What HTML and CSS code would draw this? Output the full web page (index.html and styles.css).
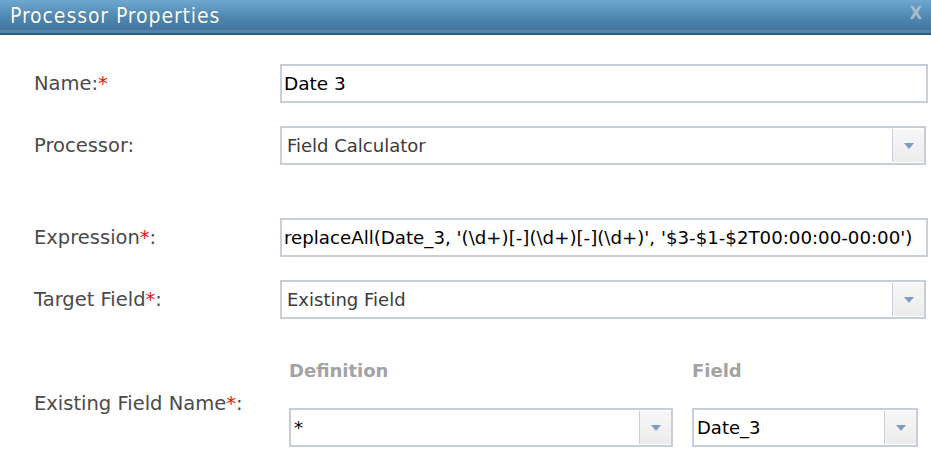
FILE: index.html
```html
<!DOCTYPE html>
<html lang="en">
<head>
  <meta charset="UTF-8">
  <title>Processor Properties</title>
  <link rel="stylesheet" href="styles.css">
</head>
<body>
  <div class="dialog">
    <div class="titlebar">
      <span class="title">Processor Properties</span>
      <span class="close">X</span>
    </div>

    <div class="form">
      <div class="row">
        <label class="label">Name:<span class="req">*</span></label>
        <div class="textbox dark">Date 3</div>
      </div>

      <div class="row">
        <label class="label">Processor:</label>
        <div class="select">
          <span class="select-value">Field Calculator</span>
          <span class="select-btn"><span class="arrow"></span></span>
        </div>
      </div>

      <div class="row spaced">
        <label class="label">Expression<span class="req">*</span>:</label>
        <div class="textbox dark expr">replaceAll(Date_3, '(\d+)[-](\d+)[-](\d+)', '$3-$1-$2T00:00:00-00:00')</div>
      </div>

      <div class="row">
        <label class="label">Target Field<span class="req">*</span>:</label>
        <div class="select">
          <span class="select-value">Existing Field</span>
          <span class="select-btn"><span class="arrow"></span></span>
        </div>
      </div>

      <div class="row field-row">
        <label class="label">Existing Field Name<span class="req">*</span>:</label>
        <div class="pair">
          <div class="col-head">Definition</div>
          <div class="col-head">Field</div>
          <div class="select">
            <span class="select-value dark">*</span>
            <span class="select-btn"><span class="arrow"></span></span>
          </div>
          <div class="select">
            <span class="select-value dark">Date_3</span>
            <span class="select-btn"><span class="arrow"></span></span>
          </div>
        </div>
      </div>
    </div>
  </div>
</body>
</html>
```

FILE: styles.css
```css
* {
  margin: 0;
  padding: 0;
  box-sizing: border-box;
}

body {
  width: 931px;
  height: 455px;
  background: #ffffff;
  font-family: 'DejaVu Sans', Verdana, sans-serif;
  overflow: hidden;
}

.titlebar {
  height: 35px;
  display: flex;
  align-items: center;
  justify-content: space-between;
  padding: 0 9px 2px 10px;
  background: linear-gradient(to bottom, #6ea7cf 0%, #5089b3 50%, #3f7099 100%);
  border-bottom: 2px solid #2f5c80;
  box-shadow: inset 0 -3px 0 rgba(255, 255, 255, 0.12);
}

.title {
  font-family: 'DejaVu Sans Condensed', 'DejaVu Sans', sans-serif;
  font-size: 21px;
  letter-spacing: 0.9px;
  color: #ffffff;
  text-shadow: 0 0 1px rgba(0, 0, 0, 0.3);
}

.close {
  font-family: 'DejaVu Sans Condensed', sans-serif;
  font-size: 18px;
  font-weight: bold;
  color: #a9bccc;
  margin-top: -6px;
}

.form {
  padding: 29px 3px 0 34px;
}

.row {
  display: grid;
  grid-template-columns: 246px 1fr;
  align-items: center;
  margin-bottom: 23px;
}

.row.spaced {
  margin-top: 53px;
}

.label {
  font-size: 19.5px;
  color: #4a4a4a;
}

.req {
  color: #ee1111;
}

.textbox,
.select {
  height: 39px;
  border: 2px solid #c8ced9;
  background: #ffffff;
  font-size: 18px;
  color: #3a3a3a;
}

.textbox {
  display: flex;
  align-items: center;
  padding-left: 2px;
  font-size: 18.5px;
  white-space: nowrap;
  overflow: hidden;
}

.textbox.expr {
  font-size: 18.2px;
}

.dark {
  color: #000000;
}

.select {
  display: flex;
  align-items: stretch;
  margin-right: 2px;
}

.select-value {
  flex: 1;
  display: flex;
  align-items: center;
  padding-left: 5px;
}

.select-btn {
  width: 32px;
  display: flex;
  align-items: center;
  justify-content: center;
  background: linear-gradient(to bottom, #f7f7f7, #ececec);
  border-left: 1px solid #c8ced9;
  margin: 1px 0;
}

.arrow {
  width: 0;
  height: 0;
  border-left: 5px solid transparent;
  border-right: 5px solid transparent;
  border-top: 6px solid #7f9cc3;
}

.field-row {
  margin-top: 40px;
}

.pair {
  display: grid;
  grid-template-columns: 384px 226px;
  column-gap: 19px;
  padding-left: 9px;
}

.col-head {
  font-size: 18px;
  font-weight: bold;
  color: #a3a3a3;
  line-height: 24px;
  margin-bottom: 25px;
}

.pair .select {
  margin-right: 0;
}

.pair .select-value {
  padding-left: 3px;
}
```
